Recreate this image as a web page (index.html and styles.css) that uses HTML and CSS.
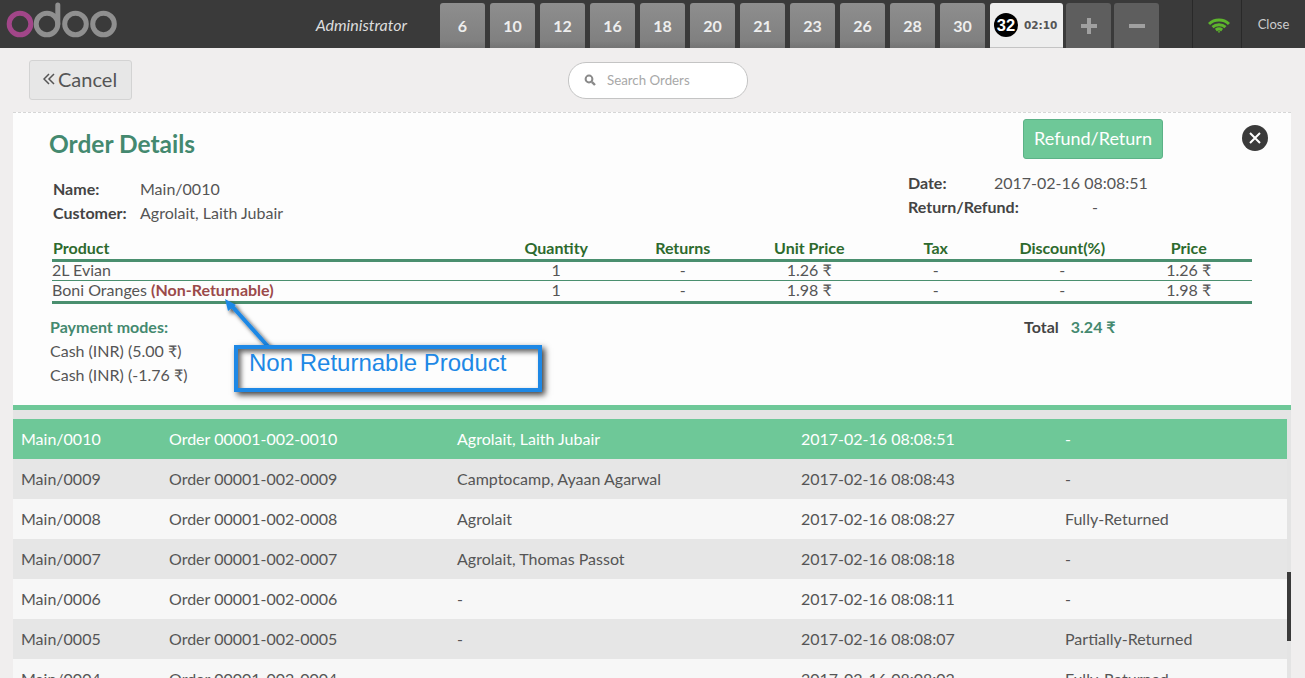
FILE: index.html
```html
<!DOCTYPE html>
<html>
<head>
  <meta charset="utf-8">
  <title>Point of Sale</title>
  <link rel="stylesheet" href="styles.css">
</head>
<body>
  <div class="topbar">
    <svg class="logo" width="120" height="48" viewBox="0 0 120 48">
      <circle cx="20" cy="24" r="10.8" fill="none" stroke="#a24689" stroke-width="5"/>
      <circle cx="47" cy="24" r="10.8" fill="none" stroke="#8f8f8f" stroke-width="5"/>
      <path d="M57.8 24V5" fill="none" stroke="#8f8f8f" stroke-width="5" stroke-linecap="round"/>
      <circle cx="75.500" cy="24" r="10.8" fill="none" stroke="#8f8f8f" stroke-width="5"/>
      <circle cx="103.500" cy="24" r="10.8" fill="none" stroke="#8f8f8f" stroke-width="5"/>
    </svg>
    <div class="username">Administrator</div>
    <div class="tabs">
      <div class="tab">6</div>
      <div class="tab">10</div>
      <div class="tab">12</div>
      <div class="tab">16</div>
      <div class="tab">18</div>
      <div class="tab">20</div>
      <div class="tab">21</div>
      <div class="tab">23</div>
      <div class="tab">26</div>
      <div class="tab">28</div>
      <div class="tab">30</div>
      <div class="tab tab-active"><span class="tab-num">32</span><span class="tab-time">02:10</span></div>
      <div class="tab tab-action">
        <svg width="16" height="16" viewBox="0 0 16 16" fill="#a0a0a0"><path d="M6 0H10V6H16V10H10V16H6V10H0V6H6Z"/></svg>
      </div>
      <div class="tab tab-action tab-minus">
        <svg width="16" height="16" viewBox="0 0 16 16" fill="#a0a0a0"><path d="M0 6H16V10H0Z"/></svg>
      </div>
    </div>
    <div class="status status-wifi">
      <svg width="22" height="15" viewBox="0 0 22 15" fill="none" stroke="#5db52c" stroke-width="3">
        <path d="M1 6C6.500 0.800 15.500 0.800 21 6"/>
        <path d="M4.500 9.200C8 6 14 6 17.500 9.200"/>
        <path d="M7.800 12C9.800 10.600 12.200 10.600 14.200 12"/>
        <path d="M9.500 13.200L11 15L12.500 13.200Z" fill="#5db52c" stroke="none"/>
      </svg>
    </div>
    <div class="status status-close">Close</div>
  </div>

  <div class="screen">
    <div class="toolbar">
      <div class="btn-cancel">
        <svg width="12" height="12" viewBox="0 0 12 12" fill="none" stroke="#555" stroke-width="1.500">
          <path d="M6 1L1 6L6 11M11 1L6 6L11 11"/>
        </svg>
        Cancel
      </div>
      <div class="search">
        <svg width="12" height="12" viewBox="0 0 12 12" fill="none" stroke="#8a8a8a">
          <circle cx="5" cy="5" r="3.400" stroke-width="2"/>
          <path d="M7.800 7.800L11 11" stroke-width="2.400"/>
        </svg>
        <span>Search Orders</span>
      </div>
    </div>

    <div class="details">
      <div class="details-head">
        <h1>Order Details</h1>
        <div class="refund">Refund/Return</div>
        <div class="close-x">
          <svg width="14" height="14" viewBox="0 0 14 14" stroke="#fff" stroke-width="2">
            <path d="M2 2L12 12M12 2L2 12"/>
          </svg>
        </div>
      </div>

      <div class="meta">
        <div class="meta-left">
          <div class="meta-row"><b>Name:</b><span>Main/0010</span></div>
          <div class="meta-row"><b>Customer:</b><span>Agrolait, Laith Jubair</span></div>
        </div>
        <div class="meta-right">
          <div class="meta-row"><b>Date:</b><span>2017-02-16 08:08:51</span></div>
          <div class="meta-row"><b>Return/Refund:</b><span>-</span></div>
        </div>
      </div>

      <table class="lines">
        <thead>
          <tr><th>Product</th><th>Quantity</th><th>Returns</th><th>Unit Price</th><th>Tax</th><th>Discount(%)</th><th>Price</th></tr>
        </thead>
        <tbody>
          <tr><td>2L Evian</td><td>1</td><td>-</td><td>1.26 ₹</td><td>-</td><td>-</td><td>1.26 ₹</td></tr>
          <tr><td>Boni Oranges <b class="nonret">(Non-Returnable)</b></td><td>1</td><td>-</td><td>1.98 ₹</td><td>-</td><td>-</td><td>1.98 ₹</td></tr>
        </tbody>
      </table>

      <div class="summary">
        <div class="payments">
          <div class="payments-title">Payment modes:</div>
          <div class="payment">Cash (INR) (5.00 ₹)</div>
          <div class="payment">Cash (INR) (-1.76 ₹)</div>
        </div>
        <div class="total"><b>Total</b><b class="total-value">3.24 ₹</b></div>
      </div>

      <svg class="callout-arrow" width="60" height="64" viewBox="0 0 60 64">
        <defs>
          <filter id="soft" x="-30%" y="-30%" width="170%" height="170%">
            <feDropShadow dx="3" dy="3" stdDeviation="2" flood-color="#000" flood-opacity="0.75"/>
          </filter>
        </defs>
        <g filter="url(#soft)">
          <path d="M50 56L8 9" stroke="#1e88e5" stroke-width="4"/>
          <path d="M2 3L13 9L5 15Z" fill="#1e88e5"/>
        </g>
      </svg>
      <div class="callout">Non Returnable Product</div>
    </div>

    <div class="orders">
      <div class="order order-selected"><span>Main/0010</span><span>Order 00001-002-0010</span><span>Agrolait, Laith Jubair</span><span>2017-02-16 08:08:51</span><span>-</span></div>
      <div class="order"><span>Main/0009</span><span>Order 00001-002-0009</span><span>Camptocamp, Ayaan Agarwal</span><span>2017-02-16 08:08:43</span><span>-</span></div>
      <div class="order"><span>Main/0008</span><span>Order 00001-002-0008</span><span>Agrolait</span><span>2017-02-16 08:08:27</span><span>Fully-Returned</span></div>
      <div class="order"><span>Main/0007</span><span>Order 00001-002-0007</span><span>Agrolait, Thomas Passot</span><span>2017-02-16 08:08:18</span><span>-</span></div>
      <div class="order"><span>Main/0006</span><span>Order 00001-002-0006</span><span>-</span><span>2017-02-16 08:08:11</span><span>-</span></div>
      <div class="order"><span>Main/0005</span><span>Order 00001-002-0005</span><span>-</span><span>2017-02-16 08:08:07</span><span>Partially-Returned</span></div>
      <div class="order"><span>Main/0004</span><span>Order 00001-002-0004</span><span>-</span><span>2017-02-16 08:08:02</span><span>Fully-Returned</span></div>
      <div class="scrollthumb"></div>
    </div>
  </div>
</body>
</html>
```

FILE: styles.css
```css
html, body { margin: 0; padding: 0; height: 100%; overflow: hidden; }
body { background: #f0eeee; font-family: Lato, "Noto Sans", sans-serif; color: #555; font-size: 16px; }
* { box-sizing: border-box; }

/* top bar */
.topbar { display: flex; height: 48px; background: #3a3a3a; }
.logo { flex: none; display: block; }
.username { width: 320px; padding-top: 15px; text-align: right; padding-right: 33px; font-style: italic; font-size: 16px; color: #ddd; }
.tabs { display: flex; gap: 5px; padding-top: 3px; width: 752px; }
.tab { width: 45px; height: 45px; border-radius: 3px 3px 0 0; background: linear-gradient(#8e8e8e, #808080 85%, #747474); color: #eee; font-weight: 700; font-size: 16px; text-align: center; line-height: 45px; }
.tab-active { width: 73px; margin-right: -2px; background: #eee; border-bottom: 1px solid #c4c4c4; display: flex; align-items: center; padding-left: 4px; }
.tab-num { width: 24px; height: 24px; border-radius: 50%; background: #000; color: #fff; line-height: 24px; font-family: "Liberation Sans", sans-serif; font-size: 16.500px; flex: none; }
.tab-time { color: #555; font-family: "DejaVu Sans", sans-serif; font-size: 10.500px; margin-left: 6px; }
.tab-action { background: #5e5e5e; display: flex; align-items: center; justify-content: center; }
.tab-minus { margin-left: -2px; }
.status { height: 48px; border-left: 1px solid #292929; text-align: center; }
.status-wifi { width: 49px; padding: 17px 0 0 4px; }
.status-close { width: 64px; color: #ccc; font-size: 13px; line-height: 48px; }

/* cancel and search */
.toolbar { position: relative; height: 64px; }
.btn-cancel { position: absolute; left: 29px; top: 12px; width: 103px; height: 40px; padding: 0 0 2px 13px; background: #e7e7e7; border: 1px solid #d3d3d3; border-radius: 3px; font-size: 20px; color: #555; display: flex; align-items: center; gap: 3px; }
.search { position: absolute; left: 568px; top: 14px; width: 180px; height: 37px; padding-bottom: 2px; border: 1px solid #c4c4c4; border-radius: 18px; background: #fff; display: flex; align-items: center; padding-left: 15px; gap: 11px; font-size: 13.300px; color: #a8a8a8; }

/* order panel */
.details { position: relative; margin: 0 14px 0 13px; height: 298px; background: #fdfdfd; border-top: 1px dashed #d6d6d6; border-bottom: 5px solid #6ec898; }
.details-head { display: flex; align-items: flex-start; height: 64px; padding-left: 36px; }
.details-head h1 { margin: 16px 0 0; width: 974px; font-size: 24.500px; font-weight: 700; color: #44896f; line-height: 30px; }
.refund { width: 140px; height: 40px; margin-top: 6px; background: #6ec898; border: 1px solid #5cb287; border-radius: 3px; color: #fff; font-size: 18px; line-height: 37px; text-align: center; }
.close-x { width: 26px; height: 26px; margin: 12px 0 0 79px; border-radius: 50%; background: #3a3a3a; display: flex; align-items: center; justify-content: center; }
.meta { display: flex; justify-content: space-between; padding-left: 40px; height: 59px; }
.meta-left { width: 855px; }
.meta-right { flex: 1; margin-top: -6px; }
.meta-row { display: flex; height: 24px; line-height: 24px; }
.meta-left b { width: 87px; color: #444; }
.meta-right b { width: 86px; color: #444; white-space: nowrap; }
.meta-right .meta-row:last-child span { margin-left: 98px; }

.lines { margin: 3px 0 0 39px; width: 1200px; border-collapse: collapse; table-layout: fixed; }
.lines th { width: 126.500px; font-weight: 700; text-align: center; color: #2d6a2d; height: 21px; padding: 0 0 2px; border-bottom: 3px solid #4a8f6f; line-height: 17px; }
.lines th:first-child { width: auto; text-align: left; padding-left: 1px; }
.lines td { text-align: center; height: 20px; line-height: 16px; padding: 0 0 2px; border-bottom: 1px solid #4a8f6f; }
.lines td:first-child { text-align: left; }
.lines tr:last-child td { border-bottom: 3px solid #4a8f6f; height: 22px; }
.nonret { color: #9b4a4a; }

.summary { display: flex; padding-left: 37px; margin-top: 11px; }
.payments { width: 974px; }
.payments-title { color: #44896f; font-weight: 700; line-height: 24px; }
.payment { line-height: 24px; }
.total { color: #444; line-height: 24px; display: flex; gap: 12px; }
.total-value { color: #44896f; }

/* annotation lying over the panel */
.callout { position: absolute; left: 221px; top: 232px; width: 308px; height: 47px; border: 4px solid #1e88e5; background: #fdfdfd; padding-left: 11px; font-family: "Liberation Sans", Arial, sans-serif; font-size: 24px; line-height: 28px; color: #1e88e5; box-shadow: 3px 3px 6px rgba(0,0,0,.75), inset 3px 3px 5px rgba(0,0,0,.6); }
.callout-arrow { position: absolute; left: 210px; top: 183px; }

/* order list */
.orders { position: relative; margin: 0 14px 0 13px; height: 300px; padding: 9px 4px 0 0; background: #e4e4e4; }
.order { display: grid; grid-template-columns: 148px 288px 344px 264px 1fr; height: 40px; line-height: 40px; padding-left: 8px; background: #f7f7f7; }
.order:nth-child(even) { background: #e6e6e6; }
.order-selected { background: #6ec898; color: #fff; }
.scrollthumb { position: absolute; right: 0; top: 162px; width: 4px; height: 69px; background: #3a3a3a; }
```
